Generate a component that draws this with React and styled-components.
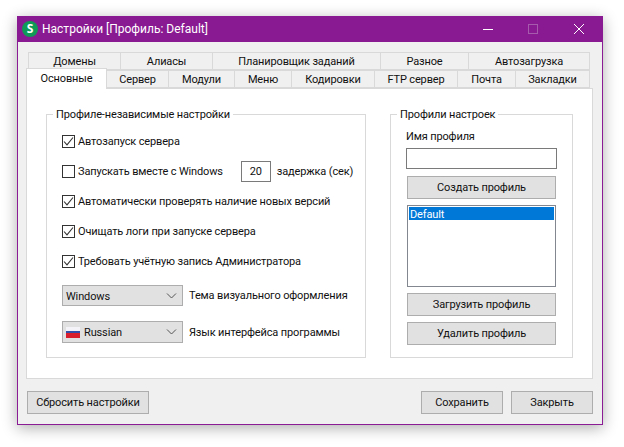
import styled, { createGlobalStyle } from "styled-components";

const GlobalStyle = createGlobalStyle`
  html, body {
    margin: 0;
    background: #fff;
  }
  body {
    font-family: Roboto, "Liberation Sans", sans-serif;
    font-size: 11px;
    letter-spacing: -0.14px;
    color: #111;
    white-space: nowrap;
  }
`;

const Page = styled.div`
  width: 624px;
  height: 447px;
  padding: 16px 0 0 17px;
  box-sizing: border-box;
  overflow: hidden;
`;

const Window = styled.div`
  width: 586px;
  height: 409px;
  box-sizing: border-box;
  background: #f0f0f0;
  border: 1px solid #8c1b96;
  border-top: none;
  box-shadow: 0 3px 14px rgba(0, 0, 0, 0.32);
`;

const TitleBar = styled.div`
  height: 26px;
  margin: 0 -1px;
  background: #8a1a91;
  color: #fff;
  display: flex;
  align-items: center;
  padding: 0 1px 0 5px;
`;

const TitleText = styled.div`
  margin-left: 4px;
  font-size: 12px;
  letter-spacing: 0;
  flex: 1;
`;

const WinButton = styled.div`
  width: ${(p) => p.$w || 46}px;
  height: 26px;
  display: flex;
  align-items: center;
  justify-content: center;
`;

const Body = styled.div`
  padding: 10px 9px 0 8px;
`;

const TabRow = styled.div`
  display: flex;
  height: 18px;
  padding-left: ${(p) => p.$indent || 0}px;
`;

const Tab = styled.div`
  width: ${(p) => p.$w}px;
  box-sizing: border-box;
  height: ${(p) => (p.$active ? 21 : 18)}px;
  margin-top: ${(p) => (p.$active ? -2 : 0)}px;
  padding: ${(p) => (p.$active ? "0 0 1px" : "2px 0 0")};
  position: relative;
  z-index: ${(p) => (p.$active ? 2 : 0)};
  background: ${(p) => (p.$active ? "#fff" : "#f0f0f0")};
  border: 1px solid #d9d9d9;
  border-left-width: ${(p) => (p.$first ? 1 : 0)}px;
  border-bottom-width: ${(p) => (p.$active ? 0 : 1)}px;
  display: flex;
  align-items: center;
  justify-content: center;
  line-height: 14px;
`;

const Panel = styled.div`
  width: 567px;
  height: 291px;
  box-sizing: border-box;
  background: #fff;
  border: 1px solid #d9d9d9;
  padding: 17px 19px 0 19px;
  display: flex;
  justify-content: space-between;
`;

const Group = styled.fieldset`
  margin: 0;
  width: ${(p) => p.$w}px;
  height: 252px;
  box-sizing: border-box;
  border: 1px solid #d9d9d9;
  padding: 0 0 0 15px;
  min-width: 0;
`;

const Legend = styled.legend`
  padding: 2px 3px 0;
  margin-left: -9px;
  line-height: 14px;
`;

const Options = styled.div`
  display: flex;
  flex-direction: column;
  padding-top: 4px;
`;

const Row = styled.div`
  height: 30px;
  display: flex;
  align-items: center;
`;

const Box = styled.span`
  width: 13px;
  height: 13px;
  box-sizing: border-box;
  border: 1px solid #333;
  background: #fff;
  margin-right: 3px;
  display: flex;
  align-items: center;
  justify-content: center;
  flex: none;
`;

const NumberField = styled.div`
  width: 30px;
  height: 21px;
  box-sizing: border-box;
  border: 1px solid #7a7a7a;
  margin: 0 6px 0 18px;
  display: flex;
  align-items: center;
  justify-content: center;
`;

const ComboRow = styled.div`
  display: flex;
  align-items: center;
  height: ${(p) => p.$h}px;
  margin-top: ${(p) => p.$top}px;
`;

const Combo = styled.div`
  width: 121px;
  height: 100%;
  box-sizing: border-box;
  background: #e1e1e1;
  border: 1px solid #adadad;
  display: flex;
  align-items: center;
  padding: 0 3px;
  margin-right: 6px;
  gap: 4px;
`;

const ComboValue = styled.span`
  flex: 1;
  padding-top: 1px;
`;

const Flag = styled.span`
  width: 14px;
  height: 11px;
  background: linear-gradient(#f4f4f8 0 33%, #2f4fa8 33% 50%, #d81e2c 50%);
`;

const ProfileColumn = styled.div`
  display: flex;
  flex-direction: column;
  padding-right: 15px;
`;

const FieldLabel = styled.div`
  line-height: 16px;
  margin: 7px 0 3px;
`;

const TextField = styled.div`
  width: 151px;
  height: 21px;
  box-sizing: border-box;
  border: 1px solid #7a7a7a;
  background: #fff;
`;

const Button = styled.div`
  width: ${(p) => p.$w || 149}px;
  height: 23px;
  box-sizing: border-box;
  margin-left: ${(p) => p.$left || 0}px;
  margin-top: ${(p) => p.$top || 0}px;
  background: #e1e1e1;
  border: 1px solid #adadad;
  display: flex;
  align-items: center;
  justify-content: center;
`;

const ListBox = styled.div`
  width: 149px;
  height: 82px;
  margin: 6px 0 6px 1px;
  box-sizing: border-box;
  border: 1px solid #828790;
  background: #fff;
  padding: 1px;
`;

const ListItem = styled.div`
  height: 13px;
  line-height: 15px;
  padding-left: 1px;
  background: ${(p) => (p.$selected ? "#0078d7" : "transparent")};
  color: ${(p) => (p.$selected ? "#fff" : "#111")};
`;

const Footer = styled.div`
  display: flex;
  padding: 12px 0 0 1px;
  gap: 8px;
`;

const Spacer = styled.div`
  flex: 1;
`;

const ChevronIcon = styled.svg`
  margin-right: 2px;
  flex: none;
`;

const LogoIcon = styled.svg`
  flex: none;
`;

const LogoLetter = styled.text`
  font-family: "Open Sans", sans-serif;
  font-size: 12px;
  font-weight: 700;
  letter-spacing: 0;
  fill: #fff;
  text-anchor: middle;
`;

const Check = () => (
  <svg width="11" height="11" viewBox="0 0 11 11" fill="none">
    <path d="M1 5.5 L4 8.8 L10 1.5" stroke="#333" strokeWidth="1.1" />
  </svg>
);

const Chevron = () => (
  <ChevronIcon width="11" height="6" viewBox="0 0 11 6" fill="none">
    <path d="M1 0.5 L5.5 5 L10 0.5" stroke="#555" strokeWidth="1" />
  </ChevronIcon>
);

const AppIcon = () => (
  <LogoIcon width="16" height="16" viewBox="0 0 16 16">
    <circle cx="8" cy="8" r="8" fill="#0f9a57" />
    <LogoLetter x="8" y="12">S</LogoLetter>
  </LogoIcon>
);

const topTabs = [
  ["Домены", 93],
  ["Алиасы", 92],
  ["Планировщик заданий", 168],
  ["Разное", 88],
  ["Автозагрузка", 121],
];

const mainTabs = [
  ["Основные", 81],
  ["Сервер", 62],
  ["Модули", 66],
  ["Меню", 57],
  ["Кодировки", 83],
  ["FTP сервер", 83],
  ["Почта", 58],
  ["Закладки", 74],
];

const options = [
  ["Автозапуск сервера", true],
  ["Запускать вместе с Windows", false],
  ["Автоматически проверять наличие новых версий", true],
  ["Очищать логи при запуске сервера", true],
  ["Требовать учётную запись Администратора", true],
];

export default function App() {
  return (
    <Page>
      <GlobalStyle />
      <Window>
        <TitleBar>
          <AppIcon />
          <TitleText>Настройки [Профиль: Default]</TitleText>
          <WinButton $w={44}>
            <svg width="10" height="10">
              <path d="M0 5.5H10" stroke="#fff" />
            </svg>
          </WinButton>
          <WinButton>
            <svg width="10" height="10">
              <rect x="0.5" y="0.5" width="9" height="9" fill="none" stroke="#a65bac" />
            </svg>
          </WinButton>
          <WinButton>
            <svg width="10" height="10">
              <path d="M0 0L10 10M10 0L0 10" stroke="#fff" />
            </svg>
          </WinButton>
        </TitleBar>
        <Body>
          <TabRow $indent={2}>
            {topTabs.map(([label, w], i) => (
              <Tab key={label} $w={w} $first={i === 0}>
                {label}
              </Tab>
            ))}
          </TabRow>
          <TabRow>
            {mainTabs.map(([label, w], i) => (
              <Tab key={label} $w={w} $first={i === 0} $active={i === 0}>
                {label}
              </Tab>
            ))}
          </TabRow>
          <Panel>
            <Group $w={320}>
              <Legend>Профиле-независимые настройки</Legend>
              <Options>
                {options.map(([label, checked], i) => (
                  <Row key={label}>
                    <Box>{checked && <Check />}</Box>
                    {label}
                    {i === 1 && (
                      <>
                        <NumberField>20</NumberField>
                        задержка (сек)
                      </>
                    )}
                  </Row>
                ))}
              </Options>
              <ComboRow $h={21} $top={9}>
                <Combo>
                  <ComboValue>Windows</ComboValue>
                  <Chevron />
                </Combo>
                Тема визуального оформления
              </ComboRow>
              <ComboRow $h={22} $top={15}>
                <Combo>
                  <Flag />
                  <ComboValue>Russian</ComboValue>
                  <Chevron />
                </Combo>
                Язык интерфейса программы
              </ComboRow>
            </Group>
            <Group $w={183}>
              <Legend>Профили настроек</Legend>
              <ProfileColumn>
                <FieldLabel>Имя профиля</FieldLabel>
                <TextField />
                <Button $left={1} $top={7}>Создать профиль</Button>
                <ListBox>
                  <ListItem $selected>Default</ListItem>
                </ListBox>
                <Button $left={1}>Загрузить профиль</Button>
                <Button $left={1} $top={6}>Удалить профиль</Button>
              </ProfileColumn>
            </Group>
          </Panel>
          <Footer>
            <Button $w={122}>Сбросить настройки</Button>
            <Spacer />
            <Button $w={82}>Сохранить</Button>
            <Button $w={82}>Закрыть</Button>
          </Footer>
        </Body>
      </Window>
    </Page>
  );
}
